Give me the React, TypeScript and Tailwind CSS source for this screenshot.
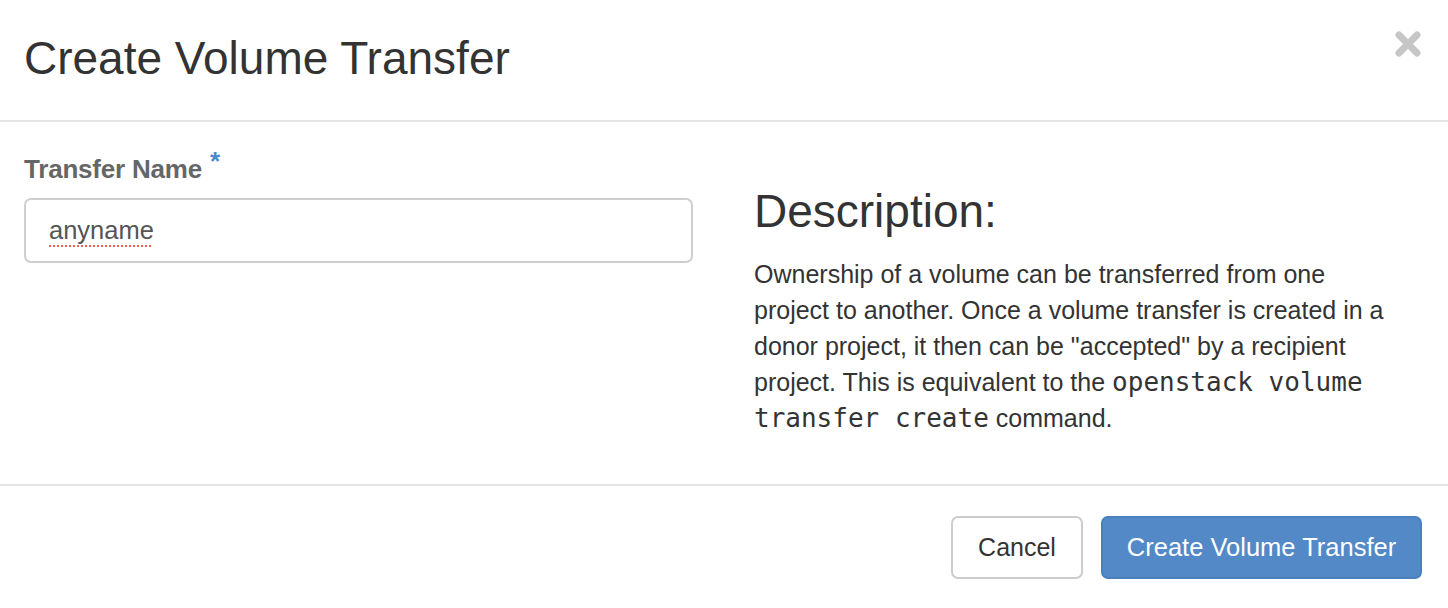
import React from "react";

export default function App() {
  return (
    <div
      className="w-[1448px] h-[608px] bg-white text-[#333] overflow-hidden"
      style={{ fontFamily: '"Liberation Sans", Arial, sans-serif' }}
    >
      {/* Header */}
      <div className="h-[122px] border-b-2 border-[#e5e5e5] flex items-start justify-between pl-[24px] pr-[26px]">
        <h3 className="text-[46px] leading-[1.1] font-normal mt-[33px] text-[#333]">
          Create Volume Transfer
        </h3>
        <button className="mt-[30px] w-[28px] h-[28px] flex items-center justify-center" aria-label="Close">
          <svg width="26" height="26" viewBox="0 0 26 26">
            <path d="M4 4 L22 22 M22 4 L4 22" stroke="#c6c6c6" strokeWidth="7" strokeLinecap="round" />
          </svg>
        </button>
      </div>

      {/* Body */}
      <div className="h-[362px] flex pl-[24px] pr-[20px]">
        <div className="w-[669px] pt-[30px]">
          <label className="block text-[26px] leading-[34px] font-bold text-[#666] mb-[12px] tracking-[-0.2px]">
            Transfer Name
            <span className="text-[#4a8ad0] text-[26px] font-bold align-top relative -top-[8px] ml-[8px]">*</span>
          </label>
          <div className="h-[65px] border-2 border-[#cfcfcf] rounded-[7px] flex items-center pl-[23px]">
            <span className="text-[25.5px] text-[#555] underline decoration-dotted decoration-[#e8645a] decoration-2 underline-offset-[6px]">
              anyname
            </span>
          </div>
        </div>
        <div className="ml-[61px] flex-1 pt-[64px]">
          <h3 className="text-[46px] leading-[1.1] font-normal text-[#333] mb-[19px]">Description:</h3>
          <p className="text-[25px] leading-[36px] text-[#333] whitespace-nowrap">
            Ownership of a volume can be transferred from one
            <br />
            project to another. Once a volume transfer is created in a
            <br />
            donor project, it then can be "accepted" by a recipient
            <br />
            project. This is equivalent to the{" "}
            <code className="text-[26px]" style={{ fontFamily: '"DejaVu Sans Mono", monospace' }}>
              openstack volume
            </code>
            <br />
            <code className="text-[26px]" style={{ fontFamily: '"DejaVu Sans Mono", monospace' }}>
              transfer create
            </code>{" "}
            command.
          </p>
        </div>
      </div>

      {/* Footer */}
      <div className="border-t-2 border-[#e5e5e5] flex justify-end items-start gap-[18px] pt-[30px] pr-[26px]">
        <button className="h-[63px] w-[132px] border-2 border-[#cccccc] rounded-[7px] bg-white text-[25px] text-[#333]">
          Cancel
        </button>
        <button className="h-[63px] w-[321px] border-2 border-[#4a80bd] rounded-[7px] bg-[#5289c6] text-[25.5px] text-white">
          Create Volume Transfer
        </button>
      </div>
    </div>
  );
}
